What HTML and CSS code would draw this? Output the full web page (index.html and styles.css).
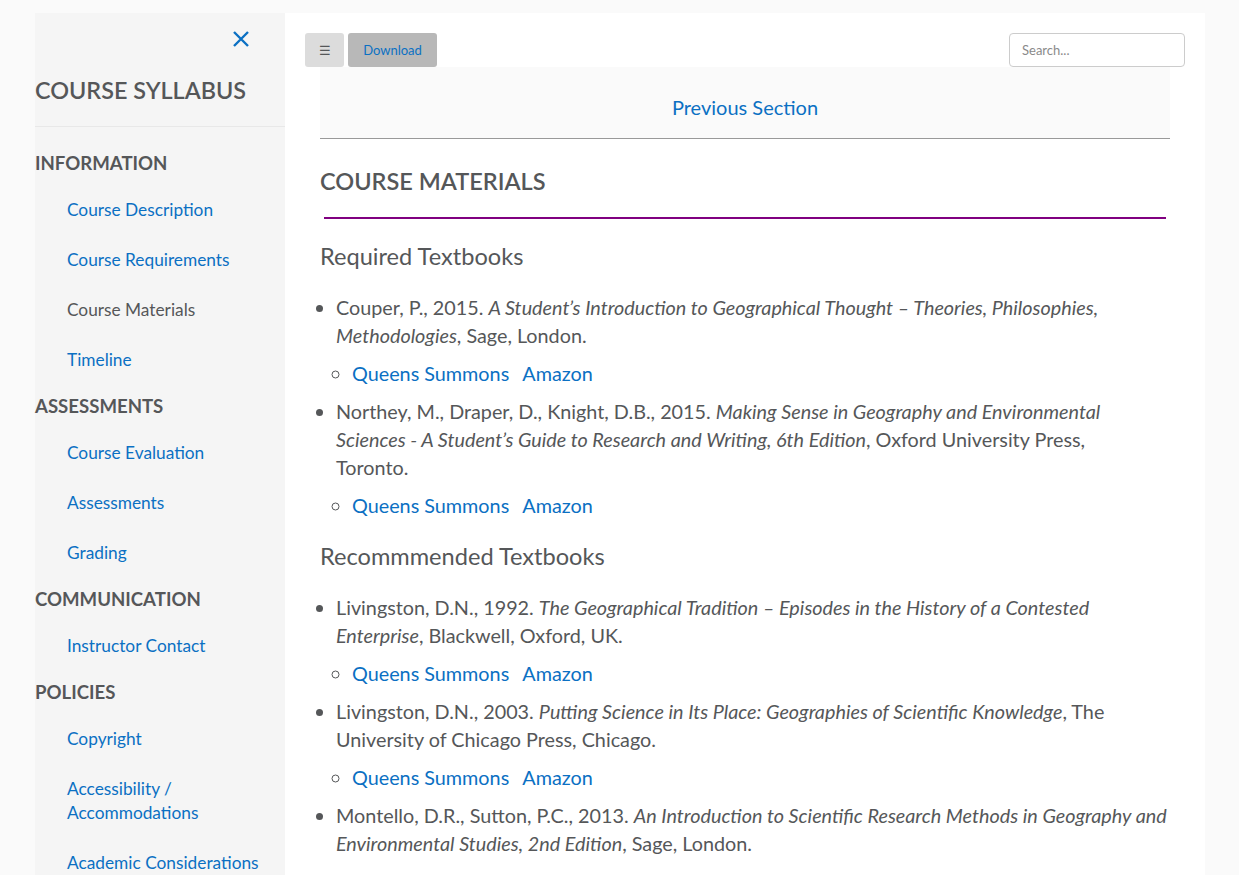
FILE: index.html
```html
<!DOCTYPE html>
<html lang="en">
<head>
<meta charset="utf-8">
<title>Course Syllabus</title>
<link rel="stylesheet" href="styles.css">
</head>
<body>
<div class="page">
  <aside class="sidebar">
    <div class="close-row">
      <a class="close" href="#" aria-label="Close menu">
        <svg width="18" height="18" viewBox="0 0 18 18"><path d="M2 2 L16 16 M16 2 L2 16" stroke="#0b70c3" stroke-width="2.4" fill="none"/></svg>
      </a>
    </div>
    <h1 class="side-title">COURSE SYLLABUS</h1>
    <nav class="side-nav">
      <h2 class="side-head">INFORMATION</h2>
      <ul class="side-list">
        <li><a href="#">Course Description</a></li>
        <li><a href="#">Course Requirements</a></li>
        <li><span class="current">Course Materials</span></li>
        <li><a href="#">Timeline</a></li>
      </ul>
      <h2 class="side-head">ASSESSMENTS</h2>
      <ul class="side-list">
        <li><a href="#">Course Evaluation</a></li>
        <li><a href="#">Assessments</a></li>
        <li><a href="#">Grading</a></li>
      </ul>
      <h2 class="side-head">COMMUNICATION</h2>
      <ul class="side-list">
        <li><a href="#">Instructor Contact</a></li>
      </ul>
      <h2 class="side-head">POLICIES</h2>
      <ul class="side-list">
        <li><a href="#">Copyright</a></li>
        <li><a href="#">Accessibility /<br>Accommodations</a></li>
        <li><a href="#">Academic Considerations</a></li>
      </ul>
    </nav>
  </aside>
  <main class="main">
    <div class="toolbar">
      <button class="btn btn-menu" type="button">&#9776;</button>
      <button class="btn btn-download" type="button">Download</button>
      <input class="search" type="text" placeholder="Search...">
    </div>
    <div class="content">
      <div class="prev-box"><a href="#">Previous Section</a></div>
      <h2 class="section-title">COURSE MATERIALS</h2>
      <hr class="purple-rule">
      <h3 class="sub-title">Required Textbooks</h3>
      <ul class="refs">
        <li>Couper, P., 2015. <em>A Student’s Introduction to Geographical Thought – Theories, Philosophies, Methodologies</em>, Sage, London.
          <ul class="links"><li><a href="#">Queens Summons</a> <a class="alt" href="#">Amazon</a></li></ul>
        </li>
        <li>Northey, M., Draper, D., Knight, D.B., 2015. <em>Making Sense in Geography and Environmental Sciences - A Student’s Guide to Research and Writing, 6th Edition</em>, Oxford University Press,<br>Toronto.
          <ul class="links"><li><a href="#">Queens Summons</a> <a class="alt" href="#">Amazon</a></li></ul>
        </li>
      </ul>
      <h3 class="sub-title">Recommmended Textbooks</h3>
      <ul class="refs">
        <li>Livingston, D.N., 1992. <em>The Geographical Tradition – Episodes in the History of a Contested Enterprise</em>, Blackwell, Oxford, UK.
          <ul class="links"><li><a href="#">Queens Summons</a> <a class="alt" href="#">Amazon</a></li></ul>
        </li>
        <li>Livingston, D.N., 2003. <em>Putting Science in Its Place: Geographies of Scientific Knowledge</em>, The University of Chicago Press, Chicago.
          <ul class="links"><li><a href="#">Queens Summons</a> <a class="alt" href="#">Amazon</a></li></ul>
        </li>
        <li>Montello, D.R., Sutton, P.C., 2013. <em>An Introduction to Scientific Research Methods in Geography and Environmental Studies, 2nd Edition</em>, Sage, London.
          <ul class="links"><li><a href="#">Queens Summons</a> <a class="alt" href="#">Amazon</a></li></ul>
        </li>
      </ul>
    </div>
  </main>
</div>
</body>
</html>
```

FILE: styles.css
```css
html, body {
  margin: 0;
  padding: 0;
}
body {
  background: #fafafa;
  font-family: Lato, "Open Sans", "Liberation Sans", sans-serif;
  color: #555759;
}
a {
  color: #0b70c3;
  text-decoration: none;
}
.page {
  display: flex;
  margin: 13px 34px 0 35px;
  background: #ffffff;
  min-height: 900px;
}
.sidebar {
  width: 250px;
  flex: 0 0 250px;
  background: #f5f5f5;
}
.close-row {
  display: flex;
  justify-content: flex-end;
  padding: 17px 35px 0 0;
  height: 18px;
}
.close {
  display: block;
  width: 18px;
  height: 18px;
}
.close svg {
  display: block;
}
.side-title {
  margin: 0;
  padding: 27px 0 21px;
  font-size: 23.4px;
  line-height: 30px;
  font-weight: 600;
  color: #555759;
  border-bottom: 1px solid #e8e8e8;
}
.side-nav {
  padding-top: 15px;
}
.side-head {
  margin: 0;
  font-size: 18.6px;
  line-height: 43px;
  font-weight: 700;
  color: #555759;
}
.side-list {
  list-style: none;
  margin: 0;
  padding: 0;
}
.side-list li {
  padding: 13px 0 13px 32px;
  font-size: 17.3px;
  line-height: 24px;
}
.side-list .current {
  color: #555759;
}
.main {
  flex: 1;
  min-width: 0;
}
.toolbar {
  display: flex;
  align-items: center;
  padding: 20px 20px 0;
  height: 34px;
}
.btn {
  height: 34px;
  border: none;
  border-radius: 3px;
  font-family: Lato, "Liberation Sans", sans-serif;
  font-size: 13px;
  cursor: pointer;
}
.btn-menu {
  width: 39px;
  background: #dcdcdc;
  color: #555759;
  font-size: 13px;
}
.btn-download {
  width: 89px;
  margin-left: 4px;
  background: #b8b8b8;
  color: #0b70c3;
}
.search {
  margin-left: auto;
  width: 176px;
  height: 34px;
  box-sizing: border-box;
  border: 1px solid #cccccc;
  border-radius: 4px;
  padding: 0 12px;
  font-family: Lato, "Liberation Sans", sans-serif;
  font-size: 13px;
  color: #555759;
  background: #ffffff;
}
.search::placeholder {
  color: #8a8a8a;
}
.content {
  padding: 0 35px 0 35px;
}
.prev-box {
  background: #fafafa;
  border-bottom: 1px solid #999999;
  text-align: center;
  padding: 27px 0 18px;
  font-size: 20px;
  line-height: 26px;
}
.section-title {
  margin: 27px 0 0;
  font-size: 23.5px;
  line-height: 30px;
  font-weight: 600;
  color: #555759;
}
.purple-rule {
  margin: 21px 4px 0;
  border: none;
  height: 2px;
  background: #800080;
}
.sub-title {
  margin: 22px 0 0;
  font-size: 23.6px;
  line-height: 30px;
  font-weight: 400;
  color: #555759;
}
.refs {
  margin: 22px 0 18px;
  padding-left: 16px;
  font-size: 19.8px;
  line-height: 28px;
}
.links {
  list-style: circle;
  margin: 10px 0;
  padding-left: 16px;
}
.links .alt {
  margin-left: 8px;
}
```
